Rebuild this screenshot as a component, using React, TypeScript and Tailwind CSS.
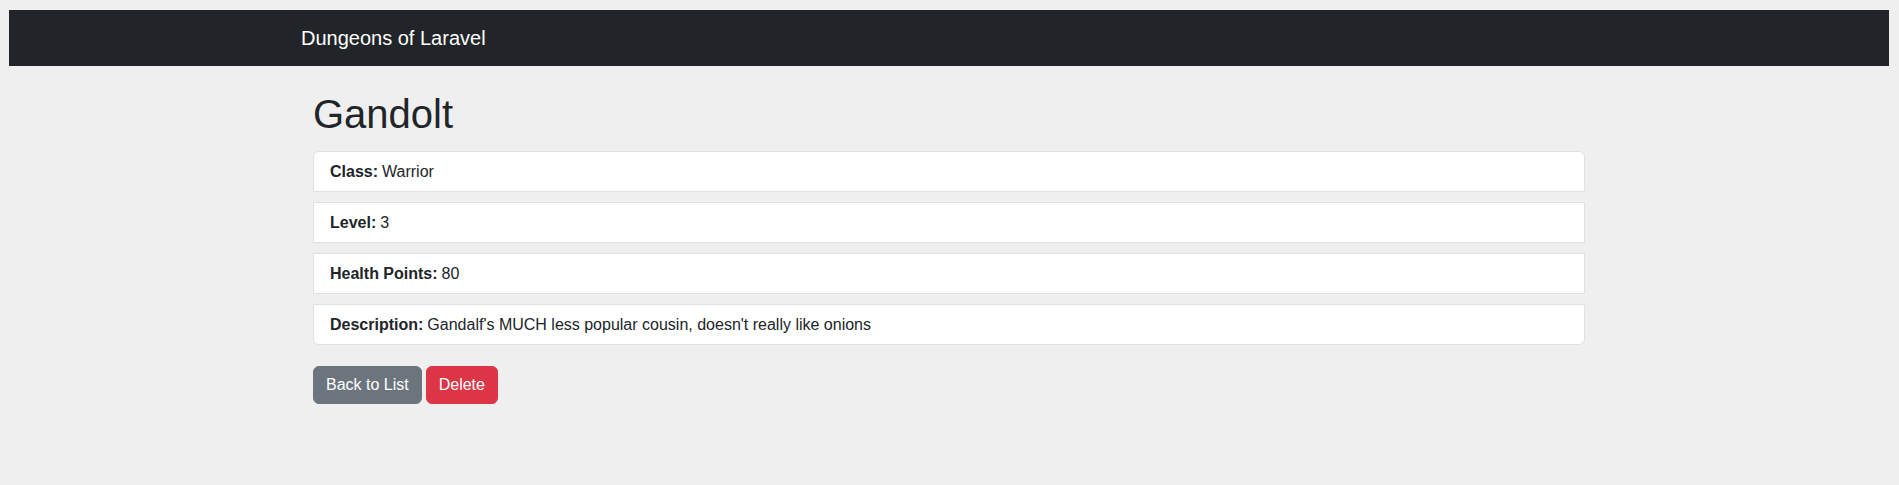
import React from 'react';

const stats = [
  { label: 'Class:', value: 'Warrior' },
  { label: 'Level:', value: '3' },
  { label: 'Health Points:', value: '80' },
  { label: 'Description:', value: "Gandalf's MUCH less popular cousin, doesn't really like onions" },
];

export default function App() {
  return (
    <div
      className="min-h-[485px] bg-[#efefef] pt-[10px] pl-[9px] pr-[10px] text-[#212529]"
      style={{ fontFamily: '"Liberation Sans", Arial, sans-serif' }}
    >
      {/* Navbar */}
      <nav className="bg-[#212529] h-[56px]">
        <div className="max-w-[1320px] mx-auto px-3 h-full flex items-center">
          <a href="#" className="text-white text-[20px] leading-[30px] py-[5px]">
            Dungeons of Laravel
          </a>
        </div>
      </nav>

      <div className="max-w-[1320px] mx-auto px-3">
        <div className="px-3">
          <h1 className="text-[40px] leading-[48px] font-normal mt-6 mb-[13px]">Gandolt</h1>

          <div className="flex flex-col gap-[10px]">
            {stats.map((s, i) => (
              <div
                key={s.label}
                className={
                  'bg-white border border-[#dee2e6] h-[41px] px-4 flex items-center text-base ' +
                  (i === 0 ? 'rounded-t-md ' : '') +
                  (i === stats.length - 1 ? 'rounded-b-md' : '')
                }
              >
                <strong className="font-bold mr-1">{s.label}</strong>
                {s.value}
              </div>
            ))}
          </div>

          <div className="mt-[21px] flex gap-1">
            <button className="bg-[#6c757d] text-white text-base leading-6 px-3 py-[6px] border border-[#6c757d] rounded-md">
              Back to List
            </button>
            <button className="bg-[#dc3545] text-white text-base leading-6 px-3 py-[6px] border border-[#dc3545] rounded-md">
              Delete
            </button>
          </div>
        </div>
      </div>
    </div>
  );
}
